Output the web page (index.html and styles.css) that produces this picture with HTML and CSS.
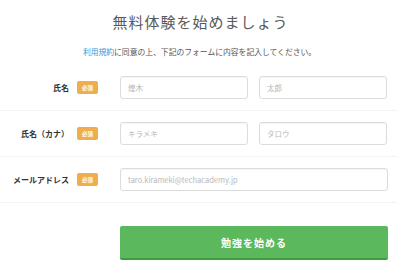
FILE: index.html
```html
<!DOCTYPE html>
<html lang="ja">
<head>
<meta charset="utf-8">
<link rel="stylesheet" href="styles.css">
</head>
<body>
<div class="page">
  <h1 class="title">無料体験を始めましょう</h1>
  <p class="lead"><a class="link" href="#">利用規約</a>に同意の上、下記のフォームに内容を記入してください。</p>
  <form class="form">
    <div class="row">
      <div class="label"><span class="label-text">氏名</span><span class="badge">必須</span></div>
      <div class="fields">
        <input class="input half" placeholder="煌木">
        <input class="input half" placeholder="太郎">
      </div>
    </div>
    <div class="row">
      <div class="label"><span class="label-text">氏名（カナ）</span><span class="badge">必須</span></div>
      <div class="fields">
        <input class="input half" placeholder="キラメキ">
        <input class="input half" placeholder="タロウ">
      </div>
    </div>
    <div class="row">
      <div class="label"><span class="label-text">メールアドレス</span><span class="badge">必須</span></div>
      <div class="fields">
        <input class="input full" placeholder="taro.kirameki@techacademy.jp">
      </div>
    </div>
    <div class="actions">
      <button class="submit" type="button">勉強を始める</button>
    </div>
  </form>
</div>
</body>
</html>
```

FILE: styles.css
```css
* { box-sizing: border-box; }
html, body { margin: 0; padding: 0; background: #fff; }
body {
  font-family: "Noto Sans CJK JP", "Noto Sans", sans-serif;
  color: #444;
}
.page {
  width: 399px;
  padding-top: 12px;
}
.title {
  margin: 0;
  font-size: 15px;
  line-height: 20px;
  font-weight: 400;
  letter-spacing: 1px;
  text-align: center;
  color: #5a5a5a;
  padding-left: 2px;
}
.lead {
  margin: 14px 0 7px;
  font-size: 7.8px;
  line-height: 12px;
  text-align: center;
  color: #555;
}
.link { color: #3a96d2; text-decoration: none; }
.form { margin: 0; }
.row {
  display: flex;
  align-items: center;
  padding: 11px 0;
  border-bottom: 1px dotted #e8e8e8;
  width: 397px;
}
.label {
  width: 120px;
  display: flex;
  align-items: center;
  justify-content: flex-end;
  gap: 8px;
  padding-right: 22px;
}
.label-text {
  font-size: 8px;
  font-weight: 700;
  color: #333;
  white-space: nowrap;
}
.badge {
  display: inline-flex;
  align-items: center;
  justify-content: center;
  width: 21px;
  height: 13px;
  border-radius: 2px;
  background: #f0ad4e;
  color: #fff;
  font-size: 5.5px;
  font-weight: 700;
}
.fields {
  display: flex;
  gap: 11px;
}
.input {
  height: 23px;
  border: 1px solid #dcdcdc;
  border-radius: 3px;
  padding: 0 7px;
  font-family: "Noto Sans CJK JP", "Noto Sans", sans-serif;
  font-size: 7.5px;
  color: #555;
  background: #fff;
  box-shadow: inset 0 1px 1px rgba(0,0,0,0.04);
}
.input::placeholder { color: #b8b8b8; }
.half { width: 128px; }
.full { width: 268px; }
.actions {
  padding: 23px 0 0 120px;
}
.submit {
  width: 268px;
  height: 34px;
  border: 0;
  border-bottom: 2px solid #3f9c3f;
  border-radius: 2px;
  background: #5cb85c;
  color: #fff;
  font-family: "Noto Sans CJK JP", "Noto Sans", sans-serif;
  font-size: 10px;
  font-weight: 700;
  letter-spacing: 1px;
}
```
